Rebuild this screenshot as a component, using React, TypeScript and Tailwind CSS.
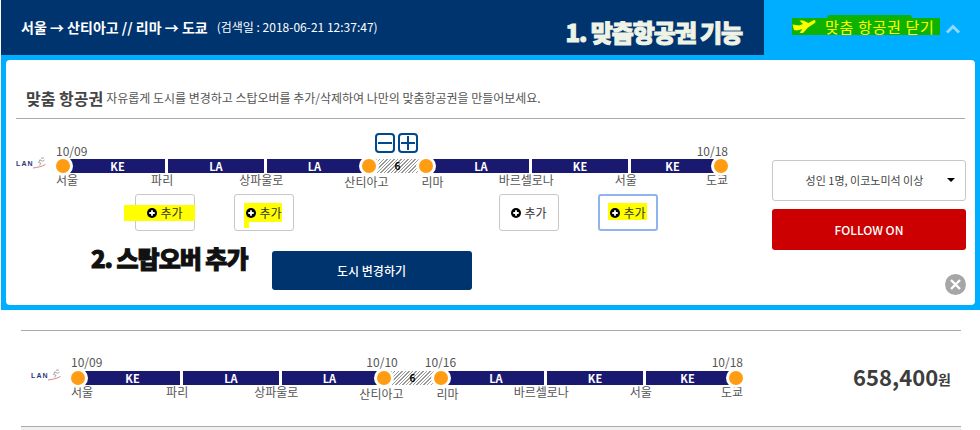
const Dot = () => (
  <span className="relative z-10 block h-[14px] w-[14px] shrink-0 rounded-full bg-[#ff9c12] ring-[3px] ring-white" />
);

const Seg = ({ w, code }: { w: string; code: string }) => (
  <span className={`flex h-[14px] items-center justify-center bg-[#191970] text-[11px] leading-none font-bold text-white ${w}`}>{code}</span>
);

const LanLogo = () => (
  <div className="flex h-[14px] w-[40px] shrink-0 items-center">
    <span className="font-['Liberation_Sans',sans-serif] text-[7px] leading-none font-bold tracking-[1.1px] text-[#2a3a78]">LAN</span>
    <svg width="13" height="12" viewBox="0 0 13 12" className="ml-[-1px]">
      <path d="M8 1.2 L11 1 M7 2.5 L5.5 5.5 L8 6.2 L6.5 8.5 M7 3 L9.5 4.2 L11.5 3.2" stroke="#a5a5a5" strokeWidth="1" fill="none" />
      <path d="M0 11 C4 10.5 9 9.5 12.5 7.5" stroke="#e0606a" strokeWidth="0.8" fill="none" />
    </svg>
  </div>
);

const Timeline = ({ stops }: { stops: boolean }) => (
  <div className="relative w-[672px] shrink-0">
    <div className={`flex h-[16px] text-[12px] leading-none text-[#555] ${stops ? "items-start pt-px" : "items-center"}`}>
      <span>10/09</span>
      {stops ? (
        <>
          <span className="ml-[264px]">10/10</span>
          <span className="ml-[27px]">10/16</span>
          <span className="ml-auto">10/18</span>
        </>
      ) : (
        <span className="ml-auto">10/18</span>
      )}
    </div>
    <div className="flex h-[14px]">
      <Dot />
      <Seg w="w-[95px]" code="KE" />
      <span className="w-[3px]" />
      <Seg w="w-[96px]" code="LA" />
      <span className="w-[3px]" />
      <Seg w="w-[95px]" code="LA" />
      <Dot />
      <span className="flex h-[14px] w-[43px] items-center justify-center bg-[repeating-linear-gradient(135deg,#999_0,#999_1px,#fff_1px,#fff_2.5px)] text-[10px] leading-none font-bold text-black">6</span>
      <Dot />
      <Seg w="w-[96px]" code="LA" />
      <span className="w-[3px]" />
      <Seg w="w-[96px]" code="KE" />
      <span className="w-[3px]" />
      <Seg w="w-[83px]" code="KE" />
      <Dot />
    </div>
    <div className="flex text-[12px] leading-[14px] whitespace-nowrap text-[#555]">
      <span>서울</span>
      <span className="ml-[73px]">파리</span>
      <span className="ml-[66px]">상파울로</span>
      <span className="mt-[2px] ml-[61px]">산티아고</span>
      <span className="mt-[2px] ml-[33px]">리마</span>
      <span className="ml-[55px]">바르셀로나</span>
      <span className="ml-[61px]">서울</span>
      <span className="ml-[69px]">도쿄</span>
    </div>
  </div>
);

const PlusCircle = () => (
  <svg width="10" height="10" viewBox="0 0 11 11" className="relative shrink-0">
    <circle cx="5.5" cy="5.5" r="5.5" fill="#000" />
    <path d="M5.5 2.5v6M2.5 5.5h6" stroke="#fff" strokeWidth="2" />
  </svg>
);

const AddButton = ({ ml, blue, children }: { ml: string; blue?: boolean; children?: React.ReactNode }) => (
  <button className={`relative flex h-[37px] w-[60px] items-center justify-center gap-[3px] rounded-[3px] border bg-white text-[12px] text-[#333] ${ml} ${blue ? "border-2 border-[#8fb4ef]" : "border-[#c8c8c8]"}`}>
    {children}
    <PlusCircle />
    <span className="relative">추가</span>
  </button>
);

export default function App() {
  return (
    <div className="h-[430px] w-[980px] overflow-hidden bg-white pl-px font-['Noto_Sans_CJK_KR','Noto_Sans',sans-serif]">
      <header className="flex h-[55px]">
        <div className="flex flex-1 items-center bg-[#00346f] pl-[20px] text-white">
          <span className="mb-[1px] text-[14px] font-bold">서울 → 산티아고 // 리마 → 도쿄</span>
          <span className="mb-[1px] ml-[9px] text-[12px]">(검색일 : 2018-06-21 12:37:47)</span>
          <span className="mt-[8px] ml-auto pr-[22px] text-[24px] leading-none font-black tracking-[-1.1px] text-[#eef3e6] [-webkit-text-stroke:1px_#eef3e6]">1. 맞춤항공권 기능</span>
        </div>
        <div className="flex w-[216px] items-center bg-[#00aeff] pl-[28px]">
          <div className="relative mb-[2px] flex h-[17px] w-[148px] items-center bg-[#0db300]">
            <span className="absolute top-[-3px] left-[35px] h-[4px] w-[85px] rounded-t-[3px] bg-[#0db300]" />
            <svg width="24" height="15" viewBox="0 0 24 15" className="relative">
              <path d="M0.5 5.5 L7 6.5 L11 5 L7.5 1.5 L11 1.5 L16.5 4 L21 1.5 C23.5 0.8 24.5 2.5 22.5 4.2 L16 8.5 L11 14 L7.5 14 L10.5 10 L5 11.5 L2 11 Z" fill="#ffff00" />
            </svg>
            <span className="relative ml-[9px] text-[15px] leading-none tracking-[0.7px] whitespace-nowrap text-[#ffff00]">맞춤 항공권 닫기</span>
          </div>
          <svg width="16" height="10" viewBox="0 0 16 10" className="mt-[2px] ml-[5px]">
            <path d="M2 8.5 L8 2.5 L14 8.5" stroke="#8fd8ff" strokeWidth="3" fill="none" />
          </svg>
        </div>
      </header>

      <section className="bg-[#00aeff] p-[5px]">
        <div className="relative h-[245px] rounded-[4px] bg-white">
          <div className="mx-[10px] flex h-[59px] items-end border-b border-[#aaa] pb-[10px] pl-[10px]">
            <span className="text-[16px] leading-[20px] font-bold text-[#444]">맞춤 항공권</span>
            <span className="ml-[3px] text-[12px] leading-[20px] tracking-[-0.02px] text-[#555]">자유롭게 도시를 변경하고 스탑오버를 추가/삭제하여 나만의 맞춤항공권을 만들어보세요.</span>
          </div>

          <div className="flex pl-[10px]">
            <div className="w-[756px]">
              <div className="relative mt-[24px] flex">
                <div className="mt-[13px]"><LanLogo /></div>
                <Timeline stops={false} />
                <div className="absolute top-[-10px] left-[359px] flex gap-[3px]">
                  <span className="flex h-[20px] w-[20px] items-center justify-center rounded-[4px] border-2 border-[#00498a] bg-white">
                    <svg width="14" height="14" viewBox="0 0 14 14"><path d="M0 7h14" stroke="#00498a" strokeWidth="2" /></svg>
                  </span>
                  <span className="flex h-[20px] w-[20px] items-center justify-center rounded-[4px] border-2 border-[#00498a] bg-white">
                    <svg width="14" height="14" viewBox="0 0 14 14"><path d="M0 7h14M7 0v14" stroke="#00498a" strokeWidth="2" /></svg>
                  </span>
                </div>
              </div>
              <div className="mt-[5px] flex">
                <AddButton ml="ml-[119px]">
                  <span className="absolute top-[10px] left-[-12px] h-[16px] w-[71px] bg-[#ffff00]" />
                </AddButton>
                <AddButton ml="ml-[39px]">
                  <span className="absolute top-[8px] left-[9px] h-[19px] w-[38px] bg-[#ffff00]" />
                  <span className="absolute top-[24px] left-[9px] h-[9px] w-[5px] bg-[#ffff00]" />
                </AddButton>
                <AddButton ml="ml-[205px]" />
                <AddButton ml="ml-[39px]" blue>
                  <span className="absolute top-[7px] left-[8px] h-[17px] w-[39px] bg-[#ffff00]" />
                </AddButton>
              </div>
              <div className="mt-[20px] flex items-start">
                <span className="mt-[-7px] ml-[75px] text-[24px] leading-[28px] font-black tracking-[-1px] whitespace-nowrap text-[#111] [-webkit-text-stroke:1px_#111]">2. 스탑오버 추가</span>
                <button className="ml-[24px] h-[39px] w-[200px] rounded-[3px] bg-[#00346f] text-[12px] font-medium text-white">도시 변경하기</button>
              </div>
            </div>
            <div className="mt-[41px] w-[194px]">
              <div className="relative flex h-[41px] items-center justify-center rounded-[3px] border border-[#c8c8c8] pr-[9px] text-[11px] text-[#444]">
                성인 1명, 이코노미석 이상
                <span className="absolute top-[17px] right-[10px] h-0 w-0 border-x-[4px] border-t-[4px] border-x-transparent border-t-black" />
              </div>
              <button className="mt-[8px] h-[41px] w-full rounded-[3px] bg-[#cc0000] text-[12px] font-medium text-white">FOLLOW ON</button>
            </div>
          </div>

          <span className="absolute right-[9px] bottom-[10px] flex h-[21px] w-[21px] items-center justify-center rounded-full bg-[#a6a6a6]">
            <svg width="11" height="11" viewBox="0 0 11 11"><path d="M1 1l9 9M10 1l-9 9" stroke="#fff" strokeWidth="2.4" /></svg>
          </span>
        </div>
      </section>

      <section className="mx-[20px] mt-[20px] w-[940px] border-y border-[#aaa]">
        <div className="flex h-[95px] pt-[24px] pl-[10px]">
          <div className="mt-[13px]"><LanLogo /></div>
          <Timeline stops />
          <div className="mt-[4px] ml-auto flex items-end self-start pr-[10px] text-[#3d3d3d]">
            <span className="text-[22px] leading-[34px] font-bold">658,400</span>
            <span className="mb-[4px] text-[14px] leading-[20px] font-bold">원</span>
          </div>
        </div>
      </section>
      <div className="mx-[20px] h-[4px] w-[940px] bg-[#f0f0f0]" />
    </div>
  );
}
